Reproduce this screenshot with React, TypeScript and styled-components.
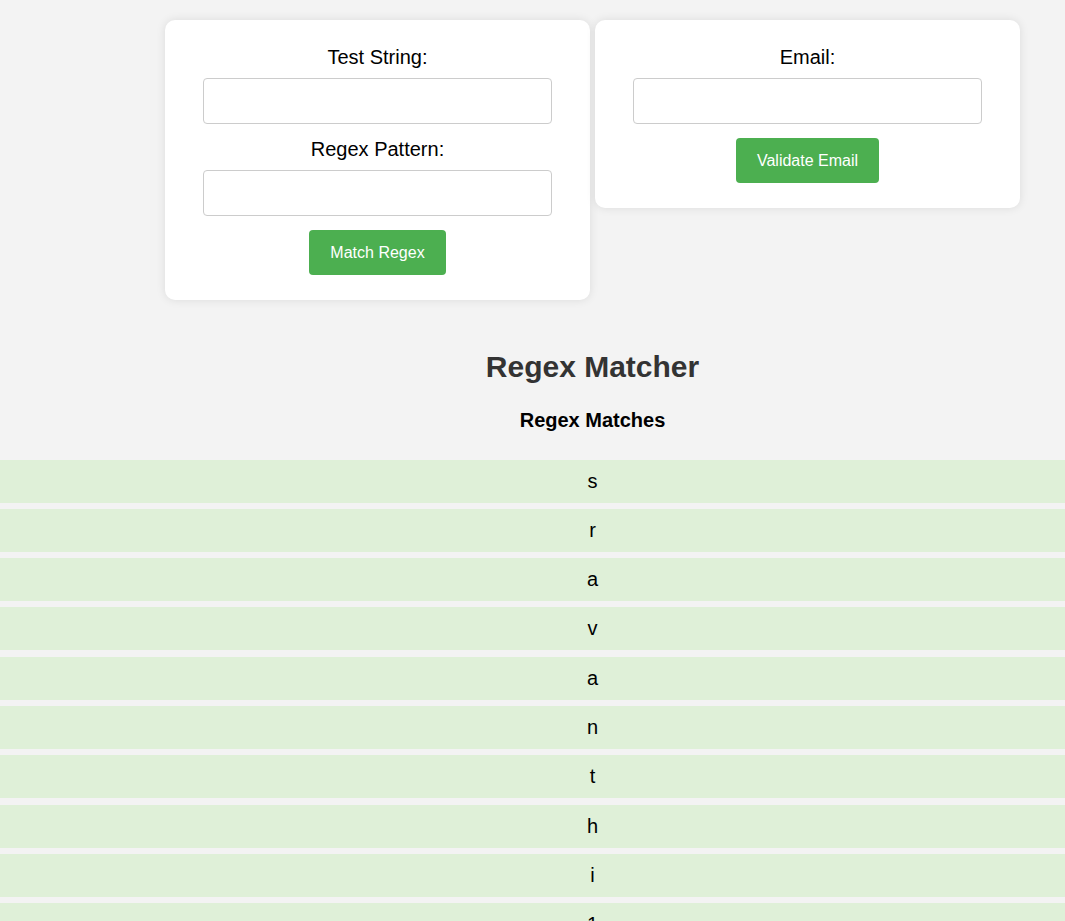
import React from "react";
import styled, { createGlobalStyle } from "styled-components";

const GlobalStyle = createGlobalStyle`
  html, body {
    margin: 0;
    padding: 0;
    background: #f3f3f3;
    font-family: "Liberation Sans", Arial, sans-serif;
    overflow-x: hidden;
  }
  * { box-sizing: border-box; }
`;

const Page = styled.div`
  width: 1185px;
  padding-top: 20px;
  display: flex;
  flex-direction: column;
  align-items: center;
`;

const CardRow = styled.div`
  display: flex;
  align-items: flex-start;
  justify-content: center;
  gap: 5px;
`;

const Card = styled.form`
  width: 425px;
  background: #ffffff;
  border-radius: 10px;
  box-shadow: 0 0 10px rgba(0, 0, 0, 0.1);
  padding: 26px 38px 25px;
  display: flex;
  flex-direction: column;
  align-items: center;
`;

const Label = styled.label`
  font-size: 20px;
  line-height: 22px;
  color: #000;
  margin-bottom: 10px;
`;

const Input = styled.input`
  width: 100%;
  height: 46px;
  border: 1px solid #cccccc;
  border-radius: 4px;
  margin: 0 0 14px;
  padding: 0 10px;
  font-size: 16px;
  font-family: inherit;
  background: #fff;
`;

const Button = styled.button`
  height: 45px;
  padding: 0 21px;
  border: none;
  border-radius: 4px;
  background: #4caf50;
  color: #ffffff;
  font-size: 16px;
  font-family: inherit;
  cursor: pointer;
`;

const Title = styled.h1`
  margin: 50px 0 0;
  font-size: 30px;
  line-height: 34.5px;
  font-weight: bold;
  color: #333333;
`;

const SubTitle = styled.h2`
  margin: 24px 0 0;
  font-size: 20px;
  line-height: 23px;
  font-weight: bold;
  color: #000;
`;

const MatchList = styled.ul`
  list-style: none;
  margin: 28px 0 0;
  padding: 0;
  width: 100%;
`;

const MatchItem = styled.li`
  background: #dff0d8;
  padding: 10px;
  font-size: 20px;
  line-height: 23px;
  text-align: center;
  color: #000;
  margin-bottom: 6.3px;
`;

const matches = ["s", "r", "a", "v", "a", "n", "t", "h", "i", "1", "2", "3"];

export default function App() {
  return (
    <>
      <GlobalStyle />
      <Page>
        <CardRow>
          <Card onSubmit={(e) => e.preventDefault()}>
            <Label htmlFor="test">Test String:</Label>
            <Input id="test" type="text" />
            <Label htmlFor="pattern">Regex Pattern:</Label>
            <Input id="pattern" type="text" />
            <Button type="submit">Match Regex</Button>
          </Card>
          <Card onSubmit={(e) => e.preventDefault()}>
            <Label htmlFor="email">Email:</Label>
            <Input id="email" type="text" />
            <Button type="submit">Validate Email</Button>
          </Card>
        </CardRow>
        <Title>Regex Matcher</Title>
        <SubTitle>Regex Matches</SubTitle>
        <MatchList>
          {matches.map((m, i) => (
            <MatchItem key={i}>{m}</MatchItem>
          ))}
        </MatchList>
      </Page>
    </>
  );
}
